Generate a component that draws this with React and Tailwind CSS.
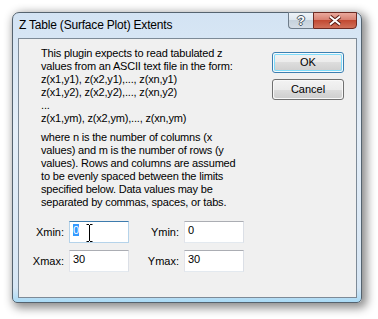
import React from 'react';

// Vista-style "Z Table (Surface Plot) Extents" dialog

const para1 = [
  'This plugin expects to read tabulated z',
  'values from an ASCII text file in the form:',
  'z(x1,y1), z(x2,y1),..., z(xn,y1)',
  'z(x1,y2), z(x2,y2),..., z(xn,y2)',
  '...',
  'z(x1,ym), z(x2,ym),..., z(xn,ym)',
];

const para2 = [
  'where n is the number of columns (x',
  'values) and m is the number of rows (y',
  'values). Rows and columns are assumed',
  'to be evenly spaced between the limits',
  'specified below. Data values may be',
  'separated by commas, spaces, or tabs.',
];

const IBeam = () => (
  <svg className="absolute left-[16px] top-[2px]" width="7" height="18" viewBox="0 0 7 18">
    <path d="M0.5 0.5h2.5M4 0.5h2.5M3.5 1v16M0.5 17.5h2.5M4 17.5h2.5" stroke="#000" strokeWidth="1" fill="none" />
  </svg>
);

const TextBox = ({ value, focused = false, selected = false }) => (
  <div
    className={
      focused
        ? 'relative w-[60px] h-[22px] bg-white border border-[#b5d3ea] border-t-[#3d7bad] pl-[3px] pt-[2px]'
        : 'relative w-[60px] h-[22px] bg-white border border-[#e3e9ef] border-t-[#abadb3] border-l-[#e2e3ea] border-r-[#dbdfe6] pl-[3px] pt-[2px]'
    }
  >
    {selected ? (
      <span className="inline-block bg-[#3399ff] text-white leading-[12px]">{value}</span>
    ) : (
      <span>{value}</span>
    )}
    {focused && <IBeam />}
  </div>
);

const Field = ({ label, labelWidth, value, focused, selected }) => (
  <div className="flex items-center">
    <div className="text-right" style={{ width: labelWidth }}>{label}</div>
    <div className="ml-[5px]">
      <TextBox value={value} focused={focused} selected={selected} />
    </div>
  </div>
);

const DialogButton = ({ children, isDefault = false }) => (
  <div
    className={
      isDefault
        ? 'w-[72px] h-[21px] rounded-[3px] border border-[#3c7fb1] p-px bg-[#f4fafd]'
        : 'w-[72px] h-[21px] rounded-[3px] border border-[#707070] p-px bg-[#f8f8f8]'
    }
  >
    <div
      className={
        isDefault
          ? 'h-full rounded-[2px] shadow-[inset_0_0_0_1px_#7fdcfa] bg-[linear-gradient(#f2f2f2_0%,#ebebeb_50%,#dddddd_50%,#cfcfcf_100%)] flex items-center justify-center'
          : 'h-full rounded-[2px] bg-[linear-gradient(#f2f2f2_0%,#ebebeb_50%,#dddddd_50%,#cfcfcf_100%)] flex items-center justify-center'
      }
    >
      {children}
    </div>
  </div>
);

export default function App() {
  return (
    <div className="w-[378px] h-[319px] bg-white pl-[12px] pt-[12px] font-['Liberation_Sans',Arial,sans-serif] text-[11px] leading-[13px] text-black">
      <div className="w-[350px] h-[291px] flex flex-col rounded-t-[7px] rounded-b-[5px] border border-[#55636f] bg-[linear-gradient(to_bottom,#d3e3f3,#e4eef8_40%,#d7e6f4_95%,#a9daf5)] pl-[5px] pr-[4px] pb-[4px] shadow-[3px_3px_10px_2px_rgba(0,0,0,0.45)]">
        {/* title bar */}
        <div className="h-[25px] flex items-start">
          <div className="pl-[1px] pt-[5px] text-[12px] leading-[15px] tracking-[-0.2px] text-black">
            Z Table (Surface Plot) Extents
          </div>
          <div className="ml-auto flex h-[17px] mt-[-1px] mr-[0px]">
            <div className="w-[25px] h-full rounded-bl-[4px] border border-[#6e7c8a] border-r-0 bg-[linear-gradient(#eef3f8_0%,#dfe7ef_45%,#c6d2dd_50%,#d4dde6_100%)] flex items-center justify-center">
              <span className="font-bold text-[13px] leading-[13px] text-white [text-shadow:1px_0_0_#46525e,-1px_0_0_#46525e,0_1px_0_#46525e,0_-1px_0_#46525e]">?</span>
            </div>
            <div className="w-[44px] h-full rounded-br-[4px] border border-[#6d2a22] bg-[linear-gradient(#e9a99d_0%,#d88172_45%,#c24a33_50%,#d0705a_100%)] flex items-center justify-center">
              <svg width="14" height="11" viewBox="0 0 14 11">
                <path d="M2 1.5L7 5.5L12 1.5M2 9.5L7 5.5L12 9.5" stroke="#5a1d15" strokeWidth="4" fill="none" />
                <path d="M2 1.5L7 5.5L12 1.5M2 9.5L7 5.5L12 9.5" stroke="#ffffff" strokeWidth="2" fill="none" />
              </svg>
            </div>
          </div>
        </div>

        {/* client area */}
        <div className="flex-1 border border-[#7d8a97] bg-[#f0f0f0] flex flex-col">
          <div className="flex">
            <div className="pl-[22px] pt-[8px] tracking-[-0.18px] whitespace-nowrap">
              {para1.map((line, i) => (
                <div key={i}>{line}</div>
              ))}
              <div className="mt-[6px]">
                {para2.map((line, i) => (
                  <div key={i}>{line}</div>
                ))}
              </div>
            </div>
            <div className="ml-auto mr-[12px] mt-[13px] flex flex-col gap-[6px]">
              <DialogButton isDefault>OK</DialogButton>
              <DialogButton>Cancel</DialogButton>
            </div>
          </div>

          {/* limits */}
          <div className="pl-[10px] mt-[12px] flex flex-col gap-[7px]">
            <div className="flex">
              <Field label="Xmin:" labelWidth="35px" value="0" focused selected />
              <Field label="Ymin:" labelWidth="50px" value="0" />
            </div>
            <div className="flex">
              <Field label="Xmax:" labelWidth="35px" value="30" />
              <Field label="Ymax:" labelWidth="50px" value="30" />
            </div>
          </div>
        </div>
      </div>
    </div>
  );
}
